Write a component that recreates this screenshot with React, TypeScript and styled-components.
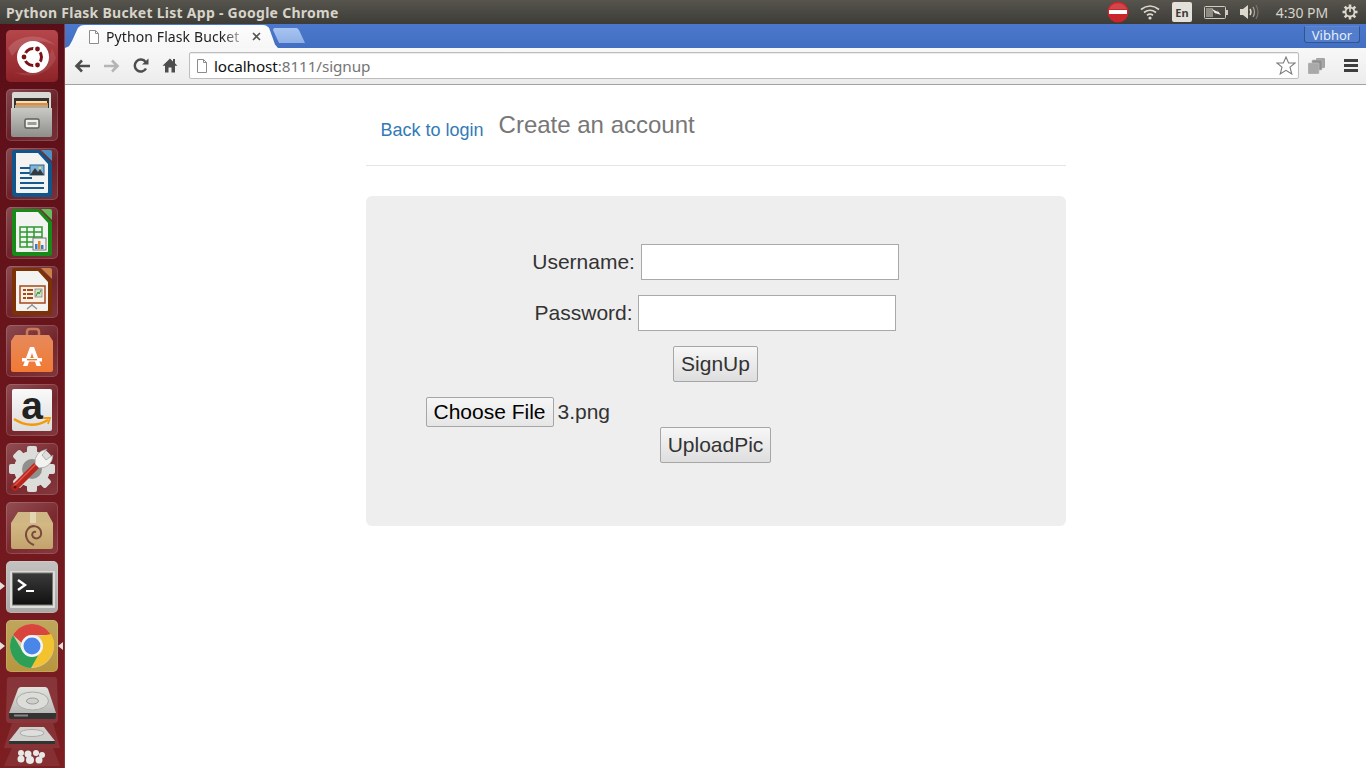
import React from "react";
import styled, { createGlobalStyle } from "styled-components";

const Global = createGlobalStyle`
  html, body { margin: 0; padding: 0; height: 100%; background: #fff; overflow: hidden; }
  #root { height: 100%; }
  * { box-sizing: border-box; }
`;

const Screen = styled.div`
  width: 1366px; height: 768px; display: flex; flex-direction: column; overflow: hidden;
  font-family: "Liberation Sans", Arial, sans-serif;
`;
const TitleBar = styled.header`
  height: 24px; flex: none; display: flex; align-items: center; padding: 0 0 0 6px;
  background: linear-gradient(#56544d, #3d3c37);
`;
const WindowTitle = styled.div`
  font: 700 14px "Noto Sans", sans-serif; color: #d7d3c9; flex: 1; white-space: nowrap; letter-spacing: 0.27px;
`;
const Tray = styled.div`
  display: flex; align-items: center; height: 24px;
`;
const TraySlot = styled.div<{ $w: number }>`
  width: ${p => p.$w}px; height: 24px; display: flex; align-items: center; justify-content: center; flex: none;
`;
const Clock = styled.div`
  font: 400 14px "Noto Sans", sans-serif; color: #d8d4ca; width: 62px; text-align: center; white-space: nowrap; flex: none;
`;
const LangBox = styled.div`
  width: 20px; height: 20px; border-radius: 2px; background: #e4e1db; color: #3c3b37;
  font: 700 11px "Noto Sans", sans-serif; display: flex; align-items: center; justify-content: center;
`;
const Desktop = styled.div`
  flex: 1; display: flex; min-height: 0;
`;
const Launcher = styled.nav`
  width: 65px; flex: none; position: relative; overflow: hidden;
  display: flex; flex-direction: column; align-items: flex-start; gap: 7px; padding: 6px 0 0 6px;
  background: linear-gradient(#5a0e17, #7c1e22);
  border-right: 1px solid #8a3a3a;
`;
const Tile = styled.div<{ $bg?: string }>`
  width: 52px; height: 52px; flex: none; border-radius: 5px;
  background: ${p => p.$bg || "linear-gradient(145deg, rgba(255,255,255,.24), rgba(255,255,255,.07) 55%, rgba(255,255,255,.14))"};
  box-shadow: inset 0 0 0 1px rgba(255,255,255,.14);
  svg { display: block; }
`;
const Pip = styled.span<{ $side: "l" | "r"; $top: number }>`
  position: absolute; top: ${p => p.$top}px; ${p => p.$side === "l" ? "left: 0;" : "right: 1px;"}
  width: 0; height: 0; border-top: 4px solid transparent; border-bottom: 4px solid transparent;
  ${p => p.$side === "l" ? "border-left: 5px solid #e3e0dc;" : "border-right: 5px solid #e3e0dc;"}
`;
const Fold = styled.div<{ $top: number; $left: number }>`
  margin: ${p => p.$top}px 0 0 ${p => p.$left}px; flex: none; svg { display: block; }
`;
const Browser = styled.div`
  flex: 1; display: flex; flex-direction: column; min-width: 0;
`;
const TabStrip = styled.div`
  height: 24px; flex: none; display: flex; align-items: flex-end;
  background: linear-gradient(#4b78cc, #436fc2);
`;
const Tab = styled.div`
  width: 213px; height: 23px; flex: none; display: flex; align-items: center; padding: 0 0 0 23px;
  background: linear-gradient(#fdfdfd, #f6f6f6);
  clip-path: polygon(0 100%, 4px 92%, 7px 70%, 13px 12%, 16px 2%, 20px 0, 198px 0, 201px 2%, 204px 12%, 210px 85%, 213px 100%);
  svg { flex: none; }
`;
const TabTitle = styled.div`
  font: 400 14px "Noto Sans", sans-serif; color: #222; width: 138px; margin: 0 8px 0 6px; white-space: nowrap; overflow: hidden;
  letter-spacing: 0.1px;
  -webkit-mask-image: linear-gradient(90deg, #000 116px, rgba(0,0,0,.2) 138px);
  mask-image: linear-gradient(90deg, #000 116px, rgba(0,0,0,.2) 138px);
`;
const NewTab = styled.div`
  width: 32px; height: 15px; flex: none; margin: 0 0 5px -5px; background: linear-gradient(#a8c4f0, #8fb0e6);
  clip-path: polygon(1px 0, 24px 0, 26px 2px, 32px 100%, 6px 100%, 0 2px);
`;
const StripGap = styled.div` flex: 1; `;
const Profile = styled.div`
  width: 56px; height: 17px; margin: 0 6px 5px 0; flex: none; border: 1px solid #32548f; border-top-color: #5f86cf;
  border-radius: 0 0 3px 3px; background: #527dcc; color: #e7edf8;
  font: 400 13px "Noto Sans", sans-serif; display: flex; align-items: center; justify-content: center;
`;
const Toolbar = styled.div`
  height: 37px; flex: none; display: flex; align-items: center; padding: 0 0 1px 3px;
  background: linear-gradient(#f8f8f8, #ececec); border-bottom: 1px solid #a2a2a2;
`;
const NavBtn = styled.div<{ $w: number }>`
  width: ${p => p.$w}px; height: 24px; flex: none; display: flex; align-items: center; justify-content: center;
`;
const Omnibox = styled.div`
  width: 1110px; height: 27px; flex: none; display: flex; align-items: center; margin-left: 5px; padding: 0 2px 0 6px; gap: 6px;
  background: #fff; border: 1px solid #bdbdbd; border-radius: 2px; box-shadow: inset 0 1px 1px rgba(0,0,0,.08);
`;
const Url = styled.div`
  flex: 1; font: 400 15.3px "Noto Sans", sans-serif; color: #757575; white-space: nowrap; letter-spacing: -0.1px;
  b { font-weight: 400; color: #111; }
`;
const Page = styled.main`
  flex: 1; background: #fff; display: flex; justify-content: center; min-height: 0;
`;
const Container = styled.div`
  width: 700px;
`;
const PageHeader = styled.div`
  height: 81px; display: flex; align-items: flex-start; gap: 15px; padding: 0 15px; border-bottom: 1px solid #e5e5e5;
`;
const BackLink = styled.a`
  font-size: 18px; line-height: 20px; color: #337ab7; text-decoration: none; margin-top: 35px; white-space: nowrap;
`;
const Heading = styled.h3`
  margin: 27px 0 0; font-size: 24px; font-weight: 400; line-height: 26px; color: #777; white-space: nowrap;
`;
const Jumbo = styled.section`
  margin-top: 30px; height: 330px; background: #eee; border-radius: 6px; padding: 48px 60px 0;
  display: flex; flex-direction: column; font-size: 21px; color: #333;
`;
const FieldRow = styled.div`
  display: flex; justify-content: center; align-items: center; gap: 5.84px; height: 36px; margin-bottom: 15px;
`;
const Label = styled.label` line-height: 36px; white-space: nowrap; `;
const TextInput = styled.input`
  width: 258px; height: 36px; background: #fff; border: 1px solid #a9a9a9; padding: 1px 2px; font: inherit; border-radius: 0; outline: none;
`;
const Btn = styled.button`
  height: 36px; padding: 0 7px; font: inherit; color: #333; border: 1px solid #a6a6a6; border-radius: 2px;
  background: linear-gradient(#f7f7f7, #dedede); white-space: nowrap;
`;
const ButtonRow = styled.div`
  display: flex; justify-content: center;
`;
const FileRow = styled.div`
  display: flex; align-items: center; gap: 4px; height: 30px; margin-top: 15px;
`;
const FileBtn = styled.button`
  height: 30px; width: 128px; padding: 0; font: inherit; color: #000; border: 1px solid #a6a6a6; border-radius: 2px;
  background: linear-gradient(#f6f6f6, #e6e6e6); white-space: nowrap;
`;
const FileName = styled.span` white-space: nowrap; `;

const S = ({ children, w = 52, h = 52 }: { children: React.ReactNode; w?: number; h?: number }) => (
  <svg width={w} height={h} viewBox={`0 0 ${w} ${h}`}>{children}</svg>
);

const UbuntuIcon = () => (
  <S>
    <defs>
      <linearGradient id="ub" x1="0" y1="0" x2="0" y2="1"><stop offset="0" stopColor="#b5474b" /><stop offset="1" stopColor="#8d2328" /></linearGradient>
    </defs>
    <rect x="0" y="0" width="52" height="52" rx="5" fill="url(#ub)" />
    <path d="M2 18C12 4 36 2 50 16C38 8 18 10 6 26Z" fill="#fff" opacity=".14" />
    <path d="M50 28C44 44 24 50 8 42C24 46 42 38 46 18Z" fill="#fff" opacity=".1" />
    <circle cx="27" cy="27" r="16" fill="#fff" />
    <circle cx="27" cy="27" r="8.5" fill="none" stroke="#7a1218" strokeWidth="3" />
    <g stroke="#fff" strokeWidth="2" fill="#7a1218">
      <circle cx="18" cy="27" r="3.4" /><circle cx="31.5" cy="19" r="3.4" /><circle cx="31.5" cy="35" r="3.4" />
    </g>
  </S>
);
const CabinetIcon = () => (
  <S>
    <defs>
      <linearGradient id="cab" x1="0" y1="0" x2="0" y2="1"><stop offset="0" stopColor="#c9c9c6" /><stop offset="1" stopColor="#8e8e8b" /></linearGradient>
    </defs>
    <path d="M6 5Q6 3 8 3H43Q45 3 45 5V20H6Z" fill="#d8d8d5" />
    <rect x="8" y="9" width="35" height="11" fill="#35322d" />
    <rect x="10" y="12" width="31" height="2" fill="#f6dfb4" />
    <rect x="10" y="14" width="32" height="2" fill="#e58a3c" />
    <rect x="9" y="16" width="33" height="3" fill="#b9a98c" />
    <path d="M5 19H46V46Q46 48 44 48H7Q5 48 5 46Z" fill="url(#cab)" />
    <rect x="19" y="30" width="14" height="9" rx="1.5" fill="#efefec" stroke="#5f5f5c" strokeWidth="1.5" />
    <rect x="21.5" y="33" width="9" height="3" fill="#9c9c99" />
  </S>
);
const OfficeDoc = ({ dark, corner, children }: { dark: string; corner: string; children: React.ReactNode }) => (
  <S>
    <path d="M8 2H33L46 15V46Q46 49 43 49H9Q6 49 6 46V4Q6 2 8 2Z" fill={dark} />
    <path d="M35 2H44Q46 2 46 4V13Z" fill={corner} />
    <path d="M10 5H32L42 16V44Q42 45 41 45H11Q10 45 10 44Z" fill="#f3f3f1" />
    {children}
  </S>
);
const WriterIcon = () => (
  <OfficeDoc dark="#11558a" corner="#4f90c0">
    <g fill="#14598f">
      <rect x="14" y="19" width="12" height="2" /><rect x="14" y="24" width="12" height="2" /><rect x="14" y="29" width="12" height="2" />
      <rect x="14" y="34" width="24" height="2" /><rect x="14" y="39" width="24" height="2" />
    </g>
    <rect x="24" y="17" width="14" height="10" fill="#7fb4dc" stroke="#35658b" />
    <path d="M24 27L29 20L32 24L34 21L38 27Z" fill="#36393b" />
    <circle cx="34" cy="20" r="1.3" fill="#f4d35e" />
  </OfficeDoc>
);
const CalcIcon = () => (
  <OfficeDoc dark="#188a1a" corner="#63bd5b">
    <g fill="none" stroke="#2d9a2d" strokeWidth="1.5">
      <rect x="14" y="20" width="22" height="20" />
      <path d="M14 25H36M14 30H36M14 35H36M21 20V40M28 20V40" />
    </g>
    <rect x="27" y="31" width="13" height="12" fill="#f1f1ee" stroke="#777" />
    <rect x="29" y="37" width="2.5" height="5" fill="#2f7fd0" />
    <rect x="32" y="34" width="2.5" height="8" fill="#e8842a" />
    <rect x="35" y="38" width="2.5" height="4" fill="#2f7fd0" />
  </OfficeDoc>
);
const ImpressIcon = () => (
  <OfficeDoc dark="#7c3206" corner="#c98046">
    <rect x="14" y="20" width="25" height="17" fill="#f8efe5" stroke="#a8481a" strokeWidth="1.5" />
    <g fill="#a8481a">
      <rect x="17" y="23" width="3" height="2" /><rect x="21" y="23" width="6" height="2" />
      <rect x="17" y="27" width="3" height="2" /><rect x="21" y="27" width="6" height="2" />
      <rect x="17" y="31" width="3" height="2" /><rect x="21" y="31" width="6" height="2" />
    </g>
    <rect x="29" y="23" width="7" height="8" fill="#cfe3c4" stroke="#777" strokeWidth=".7" />
    <path d="M30 30L32 26L33 28L35 24" fill="none" stroke="#2f8f2f" />
    <path d="M26 37V39M26 39L21 43M26 39L31 43" stroke="#8f8f8f" strokeWidth="1.3" fill="none" />
  </OfficeDoc>
);
const StoreIcon = () => (
  <S>
    <defs>
      <linearGradient id="bag" x1="0" y1="0" x2="0" y2="1"><stop offset="0" stopColor="#e68a5c" /><stop offset="1" stopColor="#f17a34" /></linearGradient>
    </defs>
    <path d="M21 15V7Q21 4 24 4H30Q33 4 33 7V15" fill="none" stroke="#c97a5a" strokeWidth="2.5" />
    <path d="M9 10H43L47 16V45Q47 47 45 47H7Q5 47 5 45V16Z" fill="url(#bag)" />
    <path d="M17 41L24 22H28L35 41H30.5L26 28L21.5 41Z" fill="#fff" />
    <rect x="16" y="33" width="20" height="3.5" fill="#fff" />
    <rect x="21" y="34" width="10" height="1.4" fill="#f07a32" />
  </S>
);
const AmazonIcon = () => (
  <S>
    <defs>
      <linearGradient id="amz" x1="0" y1="0" x2="0" y2="1"><stop offset="0" stopColor="#fafafa" /><stop offset="1" stopColor="#dcdcdc" /></linearGradient>
    </defs>
    <rect x="6" y="5" width="40" height="42" rx="2" fill="url(#amz)" />
    <text x="26" y="35" textAnchor="middle" fontFamily="Liberation Sans, sans-serif" fontWeight="700" fontSize="39" fill="#222">a</text>
    <path d="M8 35Q25 46 42 36" fill="none" stroke="#f2990f" strokeWidth="2.6" />
    <path d="M37 34L44 34L42 40" fill="none" stroke="#f2990f" strokeWidth="1.8" />
  </S>
);
const SettingsIcon = () => {
  const teeth = [0, 45, 90, 135];
  return (
    <S>
      {teeth.map(a => (
        <rect key={a} x="21" y="3" width="10" height="46" rx="2" fill="#dcdcda" transform={`rotate(${a} 26 26)`} />
      ))}
      <circle cx="26" cy="26" r="18" fill="#dcdcda" />
      <circle cx="26" cy="26" r="10" fill="#8f8f8b" />
      <path d="M9 44L33 20" stroke="#b8261d" strokeWidth="7" strokeLinecap="round" />
      <path d="M8 43L32 19" stroke="#e0584c" strokeWidth="1.5" strokeLinecap="round" />
      <path d="M29 21Q28 9 41 6L36 12L40 17L47 12Q46 25 33 25Z" fill="#f2f2f0" stroke="#9a9a98" strokeWidth=".7" />
      <circle cx="9" cy="44" r="1.5" fill="#5e0f0b" />
    </S>
  );
};
const PackageIcon = () => (
  <S>
    <defs>
      <linearGradient id="box" x1="0" y1="0" x2="0" y2="1"><stop offset="0" stopColor="#d3b985" /><stop offset="1" stopColor="#c3a36c" /></linearGradient>
    </defs>
    <path d="M5 21L12 10H41L47 21Z" fill="#cfb684" />
    <path d="M5 21H47V45Q47 47 45 47H7Q5 47 5 45Z" fill="url(#box)" />
    <path d="M24 10H30V21H24Z" fill="#e3d4b2" />
    <path d="M28 43C20 40 18 32 22 27C26 22 34 24 35 30C36 36 30 38 27 35C25 32 27 29 30 30" fill="none" stroke="#7a4a3e" strokeWidth="2" />
  </S>
);
const TerminalIcon = () => (
  <S>
    <defs>
      <linearGradient id="term" x1="0" y1="0" x2="0" y2="1"><stop offset="0" stopColor="#3a3a3a" /><stop offset="1" stopColor="#111" /></linearGradient>
    </defs>
    <rect x="4" y="10" width="45" height="37" rx="1" fill="#dcdcda" />
    <rect x="6" y="11.5" width="41" height="33" fill="#77776f" />
    <rect x="7" y="12.5" width="39" height="31" fill="url(#term)" />
    <path d="M12 19L19 24L12 29" fill="none" stroke="#fff" strokeWidth="2.4" />
    <rect x="20" y="29" width="8" height="2" fill="#fff" />
  </S>
);
const ChromeIcon = () => (
  <S>
    <circle cx="26" cy="26" r="22" fill="#d8cfa8" />
    <path d="M7 15A22 22 0 0 1 45 15H26A11 11 0 0 0 15.6 22.8Z" fill="#d9453c" />
    <path d="M45 15A22 22 0 0 1 25 48L34 32A11 11 0 0 0 33 17.5Z" fill="#f2c22f" transform="translate(0 -1)" />
    <path d="M7 15L17 32A11 11 0 0 0 34 32L25 48A22 22 0 0 1 7 15Z" fill="#2d9f56" />
    <circle cx="26" cy="26" r="11" fill="#f4f4f4" />
    <circle cx="26" cy="26" r="8.5" fill="#4a86e8" />
  </S>
);
const DiskIcon = () => (
  <S w={56} h={46}>
    <path d="M6 0H50Q53 0 53 3L54 42Q54 46 50 46H6Q2 46 2 42L3 3Q3 0 6 0Z" fill="#fff" opacity=".11" stroke="#fff" strokeOpacity=".12" />
    <defs>
      <linearGradient id="disk" x1="0" y1="0" x2="0" y2="1"><stop offset="0" stopColor="#e2e2df" /><stop offset="1" stopColor="#b9b9b6" /></linearGradient>
    </defs>
    <path d="M17 10H41Q43 10 44 12L52 36H5L14 12Q15 10 17 10Z" fill="url(#disk)" />
    <ellipse cx="28.5" cy="24" rx="16" ry="9" fill="#dcdcd9" stroke="#aaa" />
    <ellipse cx="28.5" cy="24" rx="6" ry="3" fill="#cfcfcc" stroke="#999" />
    <path d="M5 36H52V40Q52 42 50 42H7Q5 42 5 40Z" fill="#333" />
    <rect x="10" y="37.5" width="14" height="2" fill="#888" />
  </S>
);
const FoldedIcons = () => (
  <S w={64} h={45}>
    <path d="M12 0H53L60 25H4Z" fill="#fff" opacity=".09" stroke="#fff" strokeOpacity=".25" />
    <path d="M20 4H44L55 18H9Z" fill="#cfcfcc" />
    <ellipse cx="32" cy="10" rx="12" ry="3.5" fill="#dedfdc" stroke="#aaa" />
    <path d="M9 18H55V21H9Z" fill="#333" />
    <path d="M12 25H53L60 43H4Z" fill="#fff" opacity=".08" stroke="#fff" strokeOpacity=".2" />
    <g fill="#e8e8e6">
      <circle cx="21" cy="30" r="3" /><circle cx="28" cy="31" r="3.5" /><circle cx="36" cy="30" r="3" /><circle cx="42" cy="32" r="3" /><circle cx="21" cy="36" r="3.5" /><circle cx="30" cy="37" r="4" /><circle cx="39" cy="37" r="3.5" />
    </g>
  </S>
);

const BackArrow = ({ c = "#4d4d4d", flip = false }: { c?: string; flip?: boolean }) => (
  <svg width="17" height="14" viewBox="0 0 17 14">
    <path d={flip ? "M1 7H14M9 1.5L14.5 7L9 12.5" : "M16 7H3M8 1.5L2.5 7L8 12.5"} fill="none" stroke={c} strokeWidth="2.6" />
  </svg>
);
const Reload = () => (
  <svg width="16" height="16" viewBox="0 0 16 16">
    <path d="M13 10.5A6 6 0 1 1 12.6 4" fill="none" stroke="#4d4d4d" strokeWidth="2.5" />
    <path d="M9 6.5H15.5V0.5Z" fill="#4d4d4d" />
  </svg>
);
const Home = () => (
  <svg width="16" height="15" viewBox="0 0 16 15">
    <path d="M8 0.5L0.5 7.8H3V14.5H6.5V9.5H9.5V14.5H13V7.8H15.5L13 5.3V1H11V3.4Z" fill="#4d4d4d" />
  </svg>
);
const PageGlyph = () => (
  <svg width="12" height="14" viewBox="0 0 12 14">
    <path d="M1.5 0.5H7.5L10.5 3.5V13.5H1.5Z" fill="#fff" stroke="#8c8c8c" />
    <path d="M7.5 0.5V3.5H10.5" fill="none" stroke="#8c8c8c" />
  </svg>
);
const Star = () => (
  <svg width="20" height="19" viewBox="0 0 20 19">
    <path d="M10 1L12.6 7H19L14 11.2L15.8 18L10 14.3L4.2 18L6 11.2L1 7H7.4Z" fill="#fff" stroke="#7d7d7d" strokeWidth="1.1" />
  </svg>
);
const Stack = () => (
  <svg width="18" height="16" viewBox="0 0 18 16">
    <rect x="8" y="0" width="9" height="10" rx="1" fill="#a4a4a4" />
    <rect x="4" y="2" width="10" height="10" rx="1" fill="#8f8f8f" stroke="#bbb" strokeWidth=".6" />
    <rect x="0" y="5" width="11" height="11" rx="1" fill="#a9a9a9" stroke="#c4c4c4" strokeWidth=".6" />
  </svg>
);
const Menu = () => (
  <svg width="14" height="13" viewBox="0 0 14 13">
    <path d="M0 0H14V3H0ZM0 5H14V8H0ZM0 10H14V13H0Z" fill="#3e3e3e" />
  </svg>
);
const NoEntry = () => (
  <svg width="22" height="22" viewBox="0 0 22 22">
    <circle cx="11" cy="11" r="10.5" fill="#c9262c" />
    <path d="M2 8A10 10 0 0 1 20 8Z" fill="#fff" opacity=".15" />
    <rect x="2" y="9" width="18" height="4" fill="#fff" />
  </svg>
);
const Wifi = () => (
  <svg width="20" height="16" viewBox="0 0 20 16">
    <g fill="none" stroke="#dcd8ce" strokeWidth="1.7">
      <path d="M1 5.5Q10 -1.5 19 5.5" /><path d="M4 8.5Q10 4 16 8.5" /><path d="M7 11.2Q10 9 13 11.2" />
    </g>
    <circle cx="10" cy="14" r="1.6" fill="#dcd8ce" />
  </svg>
);
const Battery = () => (
  <svg width="24" height="13" viewBox="0 0 24 13">
    <rect x="0.5" y="0.5" width="21" height="12" rx="1" fill="none" stroke="#cfcbc1" />
    <rect x="2" y="2" width="7" height="9" fill="#8e8b84" />
    <rect x="22" y="4" width="2" height="5" fill="#cfcbc1" />
    <path d="M8 3L14 6L13 4L17 9L11 7L12 9Z" fill="#eee" />
  </svg>
);
const Volume = () => (
  <svg width="20" height="16" viewBox="0 0 20 16">
    <path d="M0 5H3L8 1V15L3 11H0Z" fill="#dcd8ce" />
    <path d="M10 5Q12 8 10 11" fill="none" stroke="#dcd8ce" strokeWidth="1.5" />
    <path d="M13 3Q16 8 13 13" fill="none" stroke="#aaa69c" strokeWidth="1.3" />
    <path d="M16 1Q20 8 16 15" fill="none" stroke="#77746b" strokeWidth="1.2" />
  </svg>
);
const Power = () => {
  const a = [0, 45, 90, 135];
  return (
    <svg width="16" height="16" viewBox="0 0 16 16">
      {a.map(r => <rect key={r} x="6.7" y="0.5" width="2.6" height="15" fill="#dcd8ce" transform={`rotate(${r} 8 8)`} />)}
      <circle cx="8" cy="8" r="5.4" fill="#dcd8ce" />
      <circle cx="8" cy="8" r="3.6" fill="#44433e" />
      <rect x="7.2" y="2.5" width="1.6" height="5.5" fill="#dcd8ce" />
    </svg>
  );
};

export default function App() {
  return (
    <Screen>
      <Global />
      <TitleBar>
        <WindowTitle>Python Flask Bucket List App - Google Chrome</WindowTitle>
        <Tray>
          <TraySlot $w={22}><NoEntry /></TraySlot>
          <TraySlot $w={42}><Wifi /></TraySlot>
          <TraySlot $w={22}><LangBox>En</LangBox></TraySlot>
          <TraySlot $w={46}><Battery /></TraySlot>
          <TraySlot $w={22}><Volume /></TraySlot>
          <TraySlot $w={10}></TraySlot>
          <Clock>4:30 PM</Clock>
          <TraySlot $w={33}><Power /></TraySlot>
        </Tray>
      </TitleBar>
      <Desktop>
        <Launcher>
          <Tile $bg="transparent"><UbuntuIcon /></Tile>
          <Tile><CabinetIcon /></Tile>
          <Tile><WriterIcon /></Tile>
          <Tile><CalcIcon /></Tile>
          <Tile><ImpressIcon /></Tile>
          <Tile><StoreIcon /></Tile>
          <Tile><AmazonIcon /></Tile>
          <Tile><SettingsIcon /></Tile>
          <Tile><PackageIcon /></Tile>
          <Tile $bg="linear-gradient(#c4c2c0, #aaa8a6)"><TerminalIcon /></Tile>
          <Tile $bg="linear-gradient(#bfa65c, #b8963f)"><ChromeIcon /></Tile>
          <Fold $top={-2} $left={-2}><DiskIcon /></Fold>
          <Fold $top={-7} $left={-6}><FoldedIcons /></Fold>
          <Pip $side="l" $top={558} />
          <Pip $side="l" $top={618} />
          <Pip $side="r" $top={618} />
        </Launcher>
        <Browser>
          <TabStrip>
            <Tab>
              <PageGlyph />
              <TabTitle>Python Flask Bucket</TabTitle>
              <svg width="9" height="9" viewBox="0 0 9 9"><path d="M1 1L8 8M8 1L1 8" stroke="#555" strokeWidth="1.6" /></svg>
            </Tab>
            <NewTab />
            <StripGap />
            <Profile>Vibhor</Profile>
          </TabStrip>
          <Toolbar>
            <NavBtn $w={29}><BackArrow /></NavBtn>
            <NavBtn $w={29}><BackArrow c="#b5b5b5" flip /></NavBtn>
            <NavBtn $w={29}><Reload /></NavBtn>
            <NavBtn $w={29}><Home /></NavBtn>
            <Omnibox>
              <PageGlyph />
              <Url><b>localhost</b>:8111/signup</Url>
              <Star />
            </Omnibox>
            <NavBtn $w={35}><Stack /></NavBtn>
            <NavBtn $w={33}><Menu /></NavBtn>
          </Toolbar>
          <Page>
            <Container>
              <PageHeader>
                <BackLink href="#">Back to login</BackLink>
                <Heading>Create an account</Heading>
              </PageHeader>
              <Jumbo>
                <FieldRow>
                  <Label>Username:</Label>
                  <TextInput type="text" />
                </FieldRow>
                <FieldRow>
                  <Label>Password:</Label>
                  <TextInput type="password" />
                </FieldRow>
                <ButtonRow><Btn>SignUp</Btn></ButtonRow>
                <FileRow>
                  <FileBtn>Choose File</FileBtn>
                  <FileName>3.png</FileName>
                </FileRow>
                <ButtonRow><Btn>UploadPic</Btn></ButtonRow>
              </Jumbo>
            </Container>
          </Page>
        </Browser>
      </Desktop>
    </Screen>
  );
}
